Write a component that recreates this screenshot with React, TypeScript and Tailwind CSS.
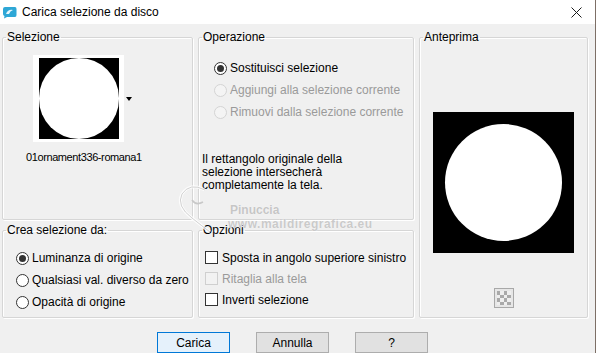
import React from "react";

type Opt = { label: string; checked?: boolean; disabled?: boolean };

function Radio({ label, checked, disabled }: Opt) {
  return (
    <div className="flex h-[22px] items-center gap-[3px] whitespace-nowrap">
      <span
        className={
          "flex h-[13px] w-[13px] items-center justify-center rounded-full border " +
          (disabled ? "border-[#d4d4d4] bg-[#f4f4f4]" : "border-[#333333] bg-white")
        }
      >
        {checked && <span className="h-[7px] w-[7px] rounded-full bg-[#333333]" />}
      </span>
      <span className={disabled ? "text-[#9a9a9a]" : "text-black"}>{label}</span>
    </div>
  );
}

function Check({ label, disabled }: Opt) {
  return (
    <div className="flex h-[21px] items-center gap-[4px] whitespace-nowrap">
      <span
        className={
          "h-[13px] w-[13px] border " +
          (disabled ? "border-[#cfcfcf] bg-[#f2f2f2]" : "border-[#333333] bg-white")
        }
      />
      <span className={disabled ? "text-[#9a9a9a]" : "text-black"}>{label}</span>
    </div>
  );
}

function Group({
  title,
  className,
  children,
}: {
  title: string;
  className?: string;
  children?: React.ReactNode;
}) {
  return (
    <fieldset
      className={
        "min-w-0 rounded-[2px] border border-[#d6d6d6] shadow-[inset_1px_1px_0_#ffffff,1px_1px_0_#ffffff] " +
        (className ?? "")
      }
    >
      <legend className="ml-[3px] px-[1px] leading-[16px] text-black">{title}</legend>
      {children}
    </fieldset>
  );
}

function TitleIcon() {
  return (
    <svg width="15" height="13" viewBox="0 0 15 13">
      <path d="M1 3 Q1 1 3 1 L13 1 Q14.5 1 14.5 3 L14.5 9 Q14.5 11 13 11 L5 11 L2 12.5 L2.5 10 Q1 9.5 1 8 Z" fill="#2ea7d6" />
      <path d="M4 8 Q6 3 11 4 Q8 5 7 8 Z" fill="#e8f7fd" />
    </svg>
  );
}

export default function App() {
  return (
    <div className="relative h-[353px] w-[596px] overflow-hidden border-r border-[#7d6f66] bg-[#f0f0f0] font-['Liberation_Sans',sans-serif] text-[12px] text-black">
      <div className="flex h-[24px] items-center bg-white pl-[2px]">
        <TitleIcon />
        <span className="ml-[5px] text-[12px]">Carica selezione da disco</span>
        <svg className="ml-auto mr-[13px]" width="11" height="11" viewBox="0 0 11 11">
          <path d="M0.5 0.5 L10.5 10.5 M10.5 0.5 L0.5 10.5" stroke="#1a1a1a" strokeWidth="1" />
        </svg>
      </div>

      <div className="grid grid-cols-[191px_216px_169px] grid-rows-[191px_96px] gap-x-[5px] gap-y-[2px] pl-[2px] pt-[5px]">
        <Group title="Selezione">
          <div className="pl-[30px] pt-[10px]">
            <div className="flex items-center">
              <div className="h-[87px] w-[91px] bg-white pl-[6px] pt-[3px]">
                <div className="h-[81px] w-[80px] bg-black">
                  <div className="h-[81px] w-[80px] rounded-full bg-white" />
                </div>
              </div>
              <span className="ml-[2px] h-0 w-0 border-x-[3px] border-t-[4px] border-x-transparent border-t-black" />
            </div>
          </div>
          <div className="mt-[7px] whitespace-nowrap pl-[23px] text-[11px] leading-[16px] tracking-[-0.4px]">
            01ornament336-romana1
          </div>
        </Group>

        <Group title="Operazione">
          <div className="pl-[15px] pt-[12px]">
            <Radio label="Sostituisci selezione" checked />
            <Radio label="Aggiungi alla selezione corrente" disabled />
            <Radio label="Rimuovi dalla selezione corrente" disabled />
          </div>
          <p className="mt-[30px] pl-[3px] leading-[13px]">
            Il rettangolo originale della
            <br />
            selezione intersecherà
            <br />
            completamente la tela.
          </p>
        </Group>

        <Group title="Anteprima" className="row-span-2">
          <div className="flex flex-col items-center">
            <div className="mt-[67px] flex h-[141px] w-[141px] items-center justify-center bg-black">
              <div className="h-[117px] w-[117px] rounded-full bg-white" />
            </div>
            <div className="mt-[35px] grid h-[20px] w-[20px] grid-cols-4 grid-rows-4 border border-[#a8a8a8] bg-[#e6e6e6] p-[2px]">
              {Array.from({ length: 16 }).map((_, i) => (
                <span
                  key={i}
                  className={(Math.floor(i / 4) + i) % 2 === 0 ? "bg-[#a9a9a9]" : "bg-[#eeeeee]"}
                />
              ))}
            </div>
          </div>
        </Group>

        <Group title="Crea selezione da:">
          <div className="pl-[13px] pt-[9px] leading-none">
            <Radio label="Luminanza di origine" checked />
            <Radio label="Qualsiasi val. diverso da zero" />
            <Radio label="Opacità di origine" />
          </div>
        </Group>

        <Group title="Opzioni">
          <div className="pl-[6px] pt-[9px]">
            <Check label="Sposta in angolo superiore sinistro" />
            <Check label="Ritaglia alla tela" disabled />
            <Check label="Inverti selezione" />
          </div>
        </Group>
      </div>

      <div className="mt-[14px] flex gap-[26px] pl-[157px]">
        <button className="h-[21px] w-[73px] border border-[#0078d7] bg-[#e5f1fb] text-[12px]">Carica</button>
        <button className="h-[21px] w-[73px] border border-[#adadad] bg-[#e1e1e1] text-[12px]">Annulla</button>
        <button className="h-[21px] w-[73px] border border-[#adadad] bg-[#e1e1e1] text-[12px]">?</button>
      </div>

      {/* watermark */}
      <div className="pointer-events-none absolute left-[170px] top-[180px] h-[55px] w-[230px]">
        <svg className="absolute left-0 top-0" width="60" height="55" viewBox="0 0 60 55">
          <path d="M35 10 Q20 2 12 14 Q6 26 22 38 Q32 46 40 52" fill="none" stroke="#ffffff" strokeWidth="3" opacity="0.8" />
          <path d="M35 10 Q20 2 12 14 Q6 26 22 38 Q32 46 40 52" fill="none" stroke="#b5b5b5" strokeWidth="1" opacity="0.6" />
          <path d="M22 20 Q26 26 33 22" fill="none" stroke="#c8c8c8" strokeWidth="1.5" />
        </svg>
        <div className="absolute left-[60px] top-[21px] text-[12px] font-bold text-[#c6c6c6] [text-shadow:0_0_1px_#ffffff]">
          Pinuccia
        </div>
        <div className="absolute left-[58px] top-[35px] text-[12px] font-bold tracking-[0.5px] text-[#cacaca] [text-shadow:0_0_1px_#ffffff]">
          www.maildiregrafica.eu
        </div>
      </div>
    </div>
  );
}
